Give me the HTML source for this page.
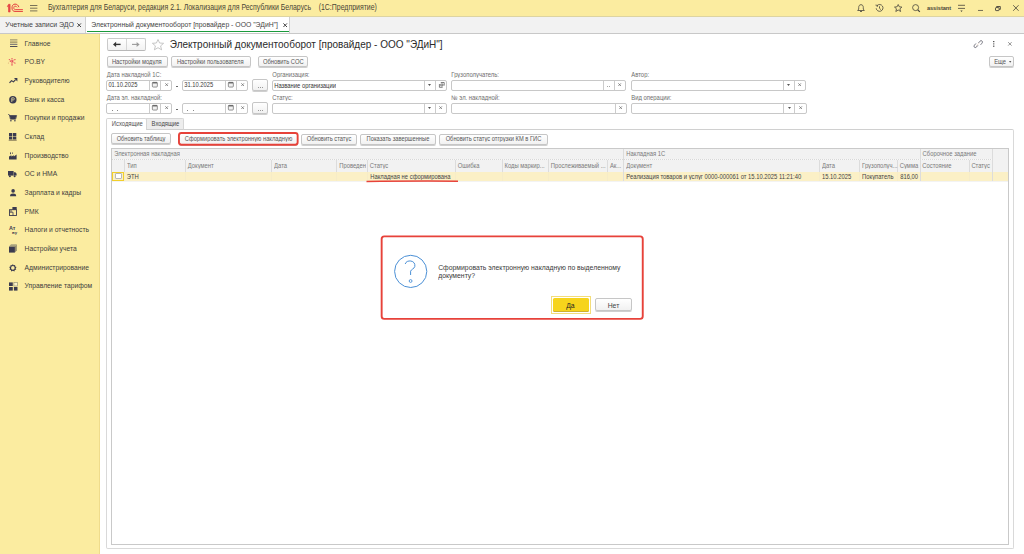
<!DOCTYPE html>
<html><head><meta charset="utf-8">
<style>
*{box-sizing:border-box;margin:0;padding:0}
html,body{width:1024px;height:554px;overflow:hidden;background:#fff;font-family:"Liberation Sans",sans-serif;color:#333}
.a{position:absolute}
.t{position:absolute;white-space:nowrap;line-height:1;transform-origin:0 0}
svg{position:absolute;overflow:visible}
.btn{position:absolute;border:1px solid #c6c6c6;border-radius:2px;background:linear-gradient(#ffffff,#f1f1f1);box-shadow:0 1px 0 #cfcfcf}
.fld{position:absolute;border:1px solid #c8c8c8;border-radius:2px;background:#fff}
.dv{position:absolute;top:0;bottom:0;width:1px;background:#cccccc}
</style></head><body>

<div class="a" style="left:0px;top:0px;width:1024px;height:16px;background:#fbeca0"></div>
<div class="a" style="left:0px;top:16px;width:1024px;height:1px;background:#ddd4a2"></div>
<div class="a" style="left:0px;top:17px;width:1024px;height:16px;background:#f2f2f2"></div>
<div class="a" style="left:0px;top:33px;width:1024px;height:1px;background:#c8c8c8"></div>
<div class="a" style="left:0px;top:34px;width:100px;height:520px;background:#fbeca0"></div>
<div class="a" style="left:99px;top:34px;width:1px;height:520px;background:#efdc8c"></div>
<svg style="left:4px;top:2px" width="22" height="12" viewBox="0 0 22 12">
 <path d="M3.3 4.6 L4.6 2.3 H6.1 V10 H4.5 V4.6 Z" fill="#e84a4a" stroke="#e33b3b" stroke-width="0.6"/>
 <path d="M14.9 5.2 C14.3 3.1 12.8 2.1 11 2.1 C8.9 2.1 8 3.9 8 5.9 C8 8.1 9.1 9.4 11 9.4 H18.9" stroke="#e33b3b" stroke-width="1" fill="none"/>
 <path d="M13.1 5.4 C12.7 4.6 12 4.1 11 4.1 C10.2 4.1 9.8 4.9 9.8 5.9 C9.8 6.9 10.4 7.6 11.2 7.6 H18.9" stroke="#e84a4a" stroke-width="1" fill="none"/></svg>
<svg style="left:30px;top:5px" width="8" height="7" viewBox="0 0 8 7"><path d="M0 0.5 H7.4 M0 3.2 H7.4 M0 5.9 H7.4" stroke="#6b6550" stroke-width="0.9"/></svg>
<div class="t" style="left:47.90px;top:4.21px;font-size:6.95px;color:#4a4536;font-weight:normal;transform:scaleY(1.2);">Бухгалтерия для Беларуси, редакция 2.1. Локализация для Республики Беларусь</div>
<div class="t" style="left:318.70px;top:4.21px;font-size:6.95px;color:#4a4536;font-weight:normal;transform:scaleY(1.2);">(1С:Предприятие)</div>
<svg style="left:857px;top:4px" width="8" height="8" viewBox="0 0 8 8"><path d="M4 0.7 C2.3 0.7 1.7 2 1.7 3.6 V5.1 L0.7 6.5 H7.3 L6.3 5.1 V3.6 C6.3 2 5.7 0.7 4 0.7 Z" stroke="#45423a" stroke-width="0.8" fill="none"/><path d="M3 7.5 H5" stroke="#45423a" stroke-width="0.8"/></svg>
<svg style="left:875px;top:4px" width="9" height="8" viewBox="0 0 9 8"><path d="M1.2 4.3 A3.4 3.4 0 1 0 2.1 1.6" stroke="#45423a" stroke-width="0.8" fill="none"/><path d="M0.5 1.1 L2.5 1.4 L2.1 3" stroke="#45423a" stroke-width="0.8" fill="none"/><path d="M4.5 2.3 V4.3 L5.9 5.6" stroke="#45423a" stroke-width="0.8" fill="none"/></svg>
<svg style="left:893.5px;top:4px" width="9" height="8" viewBox="0 0 9 8"><path d="M4.2 0.5 L5.3 2.8 L7.9 3.1 L5.9 4.8 L6.6 7.5 L4.2 6 L1.8 7.5 L2.5 4.8 L0.5 3.1 L3.1 2.8 Z" stroke="#45423a" stroke-width="0.8" fill="none" stroke-linejoin="round"/></svg>
<svg style="left:912px;top:4px" width="9" height="9" viewBox="0 0 9 9"><circle cx="3.6" cy="3.6" r="3" stroke="#45423a" stroke-width="0.8" fill="none"/><path d="M5.8 5.8 L7.8 7.8" stroke="#45423a" stroke-width="1.2"/></svg>
<div class="t" style="left:926.90px;top:5.70px;font-size:5.6px;color:#4a4536;font-weight:bold;transform:scaleY(1.1);">assistant</div>
<svg style="left:958px;top:4px" width="8" height="9" viewBox="0 0 8 9"><path d="M0 1.3 H7 M0 4.4 H7" stroke="#45423a" stroke-width="0.8"/><path d="M2.4 6.6 H4.6 L3.5 7.9 Z" fill="#45423a"/></svg>
<svg style="left:977.7px;top:10px" width="6" height="2" viewBox="0 0 6 2"><path d="M0 0.45 H5" stroke="#45423a" stroke-width="0.75"/></svg>
<svg style="left:995.3px;top:6px" width="6" height="5" viewBox="0 0 6 5"><rect x="0.5" y="1.6" width="3.6" height="3" rx="0.6" stroke="#45423a" stroke-width="0.9" fill="none"/><path d="M1.6 1.4 V0.5 H5.3 V3.4 H4.3" stroke="#45423a" stroke-width="0.9" fill="none"/></svg>
<svg style="left:1013.3px;top:4.9px" width="6" height="6" viewBox="0 0 6 6"><path d="M0.2 0.2 L5.6 5.8 M5.6 0.2 L0.2 5.8" stroke="#45423a" stroke-width="0.8"/></svg>
<div class="t" style="left:5.20px;top:21.21px;font-size:7px;color:#444;font-weight:normal;transform:scaleY(1.08);">Учетные записи ЭДО</div>
<svg style="left:77px;top:23.3px" width="5" height="5" viewBox="0 0 5 5"><path d="M0.4 0.4 L4 4 M4 0.4 L0.4 4" stroke="#444" stroke-width="1"/></svg>
<div class="a" style="left:85px;top:17px;width:205px;height:16px;background:#fff;border-left:1px solid #d0d0d0;border-right:1px solid #d0d0d0"></div>
<div class="a" style="left:87px;top:30.8px;width:202px;height:1.5px;background:#1a9a3c"></div>
<div class="t" style="left:91.30px;top:21.73px;font-size:6.85px;color:#444;font-weight:normal;transform:scaleY(1.08);">Электронный документооборот [провайдер - ООО &quot;ЭДиН&quot;]</div>
<svg style="left:282.6px;top:23.3px" width="5" height="5" viewBox="0 0 5 5"><path d="M0.4 0.4 L4 4 M4 0.4 L0.4 4" stroke="#444" stroke-width="1"/></svg>
<div class="t" style="left:24.60px;top:39.54px;font-size:6.75px;color:#3d3d3d;font-weight:normal;transform:scaleY(1.2);">Главное</div>
<div class="t" style="left:24.60px;top:58.22px;font-size:6.75px;color:#3d3d3d;font-weight:normal;transform:scaleY(1.2);">РО.BY</div>
<div class="t" style="left:24.60px;top:76.90px;font-size:6.75px;color:#3d3d3d;font-weight:normal;transform:scaleY(1.2);">Руководителю</div>
<div class="t" style="left:24.60px;top:95.58px;font-size:6.75px;color:#3d3d3d;font-weight:normal;transform:scaleY(1.2);">Банк и касса</div>
<div class="t" style="left:24.60px;top:114.26px;font-size:6.75px;color:#3d3d3d;font-weight:normal;transform:scaleY(1.2);">Покупки и продажи</div>
<div class="t" style="left:24.60px;top:132.94px;font-size:6.75px;color:#3d3d3d;font-weight:normal;transform:scaleY(1.2);">Склад</div>
<div class="t" style="left:24.60px;top:151.62px;font-size:6.75px;color:#3d3d3d;font-weight:normal;transform:scaleY(1.2);">Производство</div>
<div class="t" style="left:24.60px;top:170.30px;font-size:6.75px;color:#3d3d3d;font-weight:normal;transform:scaleY(1.2);">ОС и НМА</div>
<div class="t" style="left:24.60px;top:188.98px;font-size:6.75px;color:#3d3d3d;font-weight:normal;transform:scaleY(1.2);">Зарплата и кадры</div>
<div class="t" style="left:24.60px;top:207.66px;font-size:6.75px;color:#3d3d3d;font-weight:normal;transform:scaleY(1.2);">РМК</div>
<div class="t" style="left:24.60px;top:226.34px;font-size:6.75px;color:#3d3d3d;font-weight:normal;transform:scaleY(1.2);">Налоги и отчетность</div>
<div class="t" style="left:24.60px;top:245.02px;font-size:6.75px;color:#3d3d3d;font-weight:normal;transform:scaleY(1.2);">Настройки учета</div>
<div class="t" style="left:24.60px;top:263.70px;font-size:6.75px;color:#3d3d3d;font-weight:normal;transform:scaleY(1.2);">Администрирование</div>
<div class="t" style="left:24.60px;top:282.38px;font-size:6.75px;color:#3d3d3d;font-weight:normal;transform:scaleY(1.2);">Управление тарифом</div>
<svg style="left:9.5px;top:39px" width="8" height="8" viewBox="0 0 8 8"><path d="M0 0.9 H7.4" stroke="#8c8668" stroke-width="1"/><path d="M0 3.1 H7.4" stroke="#7d7356" stroke-width="1"/><path d="M0 5.3 H7.4" stroke="#55546a" stroke-width="0.9"/><path d="M0 7.5 H7.4" stroke="#3b3b4f" stroke-width="0.9"/></svg>
<svg style="left:8.3px;top:57.5px" width="8" height="8" viewBox="0 0 8 8"><g fill="#e5475a"><circle cx="1.3" cy="1.6" r="0.55"/><circle cx="4" cy="0.5" r="0.55"/><circle cx="7" cy="1.6" r="0.65"/><circle cx="2.3" cy="3.3" r="0.6"/><circle cx="4.6" cy="3.3" r="0.7"/><circle cx="4" cy="4.8" r="0.6"/><circle cx="0.4" cy="5" r="0.5" fill="#d8a070"/><circle cx="7" cy="5.1" r="0.6"/><circle cx="4" cy="7" r="0.65"/></g><path d="M1.3 1.6 L7 5.1 M7 1.6 L2.3 3.3 M4 0.5 V7" stroke="#e5475a" stroke-width="0.5"/></svg>
<svg style="left:8.9px;top:77.6px" width="9" height="6" viewBox="0 0 9 6"><path d="M0.5 4.9 L2.6 2.6 L4.4 3.9 L6.6 1.6" stroke="#3b3b4f" stroke-width="1.15" fill="none" stroke-linejoin="round"/><path d="M5 0 H8.4 V3.4 Z" fill="#3b3b4f"/></svg>
<svg style="left:9.2px;top:95.6px" width="8" height="8" viewBox="0 0 8 8"><circle cx="3.85" cy="3.7" r="3.7" fill="#3b3b4f"/><path d="M2.8 6 V1.8 H4.5 C5.6 1.8 5.6 3.9 4.5 3.9 H2.8" stroke="#d8cf9a" stroke-width="0.9" fill="none"/></svg>
<svg style="left:8.3px;top:114px" width="9" height="8" viewBox="0 0 9 8"><path d="M0.2 0.4 L1.4 0.8 L2.4 5.2 H7.6 L8.6 1.5 H1.6" stroke="#3b3b4f" stroke-width="0.8" fill="none"/><path d="M1.8 1.8 H8.3 L7.4 5 H2.5 Z" fill="#3b3b4f"/><circle cx="2.9" cy="6.8" r="0.8" fill="#3b3b4f"/><circle cx="6.9" cy="6.8" r="0.8" fill="#3b3b4f"/></svg>
<svg style="left:8.9px;top:133px" width="8" height="8" viewBox="0 0 8 8"><rect x="0" y="0" width="3.3" height="3" fill="#3b3b4f"/><rect x="4" y="0" width="3.3" height="3" fill="#3b3b4f"/><rect x="0" y="3.5" width="3.3" height="3" fill="#3b3b4f"/><rect x="4" y="3.5" width="3.3" height="3" fill="#3b3b4f"/><rect x="-0.3" y="6.8" width="8" height="0.8" fill="#6b6048"/></svg>
<svg style="left:8.9px;top:151.7px" width="8" height="8" viewBox="0 0 8 8"><path d="M0 7.4 V4.4 L2.4 3.2 V4.4 L4.8 3.2 V4.4 L7.6 2.6 V7.4 Z" fill="#3b3b4f"/><rect x="1" y="0.4" width="0.9" height="1.8" fill="#3b3b4f"/><rect x="3" y="0.6" width="1" height="1" fill="#3b3b4f"/></svg>
<svg style="left:8.3px;top:171px" width="9" height="7" viewBox="0 0 9 7"><rect x="0" y="0" width="5.6" height="4.6" fill="#3b3b4f"/><path d="M5.8 1.2 H7.4 L8.6 2.8 V4.6 H5.8 Z" fill="#3b3b4f"/><circle cx="1.9" cy="5.3" r="1" fill="#3b3b4f"/><circle cx="6.6" cy="5.3" r="1" fill="#3b3b4f"/></svg>
<svg style="left:9.8px;top:189px" width="7" height="8" viewBox="0 0 7 8"><circle cx="3.1" cy="1.9" r="1.8" fill="#3b3b4f"/><path d="M0 7.2 C0 5 1.2 4.4 3.1 4.4 C5 4.4 6.2 5 6.2 7.2 Z" fill="#3b3b4f"/></svg>
<svg style="left:8.9px;top:207px" width="8" height="9" viewBox="0 0 8 9"><rect x="0.5" y="2.7" width="7" height="5.8" stroke="#3b3b4f" stroke-width="0.9" fill="none"/><rect x="3.4" y="0" width="4.3" height="2.8" fill="#3b3b4f"/><path d="M0.5 5.2 H4 V8.5 M2 2.7 V5.2" stroke="#3b3b4f" stroke-width="0.8" fill="none"/></svg>
<svg style="left:8.9px;top:222px" width="8" height="12" viewBox="0 0 8 12"><text x="0" y="7.8" font-size="5.4" font-weight="bold" fill="#3b3b4f" font-family="Liberation Sans">Ат</text><text x="3.1" y="11.9" font-size="4.3" font-weight="bold" fill="#3b3b4f" font-family="Liberation Sans">ву</text></svg>
<svg style="left:8.9px;top:244px" width="8" height="9" viewBox="0 0 8 9"><path d="M0 2.6 L2 0.3 H7.8 L5.9 2.6 Z" fill="#a9a37e"/><path d="M5.9 2.6 L7.8 0.3 V6.6 L5.9 8.6 Z" fill="#8f8a6c"/><rect x="0" y="2.6" width="5.9" height="6" fill="#3b3b4f"/></svg>
<svg style="left:9.2px;top:263.9px" width="8" height="8" viewBox="0 0 8 8"><path d="M3.85 0 L4.6 1.3 L6.1 0.9 L6.2 2.4 L7.6 3 L6.6 4.2 L7.3 5.6 L5.8 5.9 L5.4 7.4 L3.85 6.7 L2.3 7.4 L1.9 5.9 L0.4 5.6 L1.1 4.2 L0.1 3 L1.5 2.4 L1.6 0.9 L3.1 1.3 Z" fill="#3b3b4f"/><circle cx="3.85" cy="3.9" r="1.8" fill="#fbeca0"/></svg>
<svg style="left:8.6px;top:281.7px" width="9" height="9" viewBox="0 0 9 9"><rect x="0" y="0.4" width="3.8" height="3.6" fill="#3b3b4f"/><rect x="4.9" y="0.4" width="3.6" height="3.6" stroke="#8a8670" stroke-width="0.6" fill="#fbf3c8"/><rect x="0" y="5" width="3.8" height="3.6" fill="#3b3b4f"/><rect x="4.9" y="5" width="3.6" height="3.6" fill="#3b3b4f"/></svg>
<div class="a" style="left:107px;top:38px;width:39px;height:13px;border:1px solid #cacaca;border-bottom-color:#b8b8b8;border-radius:2px;background:linear-gradient(#fff,#f2f2f2)"></div>
<div class="a" style="left:126px;top:39px;width:1px;height:11px;background:#d6d6d6"></div>
<svg style="left:113px;top:42.2px" width="8" height="6" viewBox="0 0 8 6"><path d="M7.6 2.4 H2.2" stroke="#333" stroke-width="1.4"/><path d="M0 2.4 L3.1 -0.2 V5 Z" fill="#333"/></svg>
<svg style="left:132px;top:42.2px" width="8" height="6" viewBox="0 0 8 6"><path d="M0 2.4 H5.4" stroke="#9a9a9a" stroke-width="1.1"/><path d="M7.6 2.4 L4.6 -0.1 V4.9 Z" fill="#9a9a9a"/></svg>
<svg style="left:152px;top:38.8px" width="13" height="12" viewBox="0 0 13 12"><path d="M6 0.5 L7.6 4 L11.6 4.3 L8.6 6.9 L9.6 10.8 L6 8.7 L2.4 10.8 L3.4 6.9 L0.4 4.3 L4.4 4 Z" stroke="#b9b9b9" stroke-width="0.8" fill="none" stroke-linejoin="round"/></svg>
<div class="t" style="left:169.80px;top:40.07px;font-size:10px;color:#2b2b2b;font-weight:normal;transform:scaleY(1.02);">Электронный документооборот [провайдер - ООО &quot;ЭДиН&quot;]</div>
<svg style="left:973.8px;top:39.9px" width="9" height="9" viewBox="0 0 9 9"><path d="M4.5 2.9 L5.9 1.3 C6.6 0.5 7.6 0.5 8.1 1.1 C8.6 1.7 8.5 2.7 7.8 3.4 L6.6 4.8" stroke="#5a5a66" stroke-width="0.85" fill="none"/><path d="M3.9 5.4 L2.6 6.9 C1.9 7.7 0.9 7.8 0.4 7.2 C-0.1 6.6 0 5.6 0.7 4.9 L1.9 3.5" stroke="#5a5a66" stroke-width="0.85" fill="none"/><path d="M2.6 5.6 L5.6 2.6" stroke="#c09070" stroke-width="0.6" stroke-dasharray="0.7 0.7"/></svg>
<svg style="left:993.2px;top:41px" width="2" height="6" viewBox="0 0 2 6"><rect x="0" y="0" width="1.4" height="1.2" fill="#555"/><rect x="0" y="2.3" width="1.4" height="1.2" fill="#777"/><rect x="0" y="4.6" width="1.4" height="1.2" fill="#555"/></svg>
<svg style="left:1008px;top:42.2px" width="4" height="4" viewBox="0 0 4 4"><path d="M0.2 0.2 L3.6 3.6 M3.6 0.2 L0.2 3.6" stroke="#666" stroke-width="0.7"/></svg>
<div class="btn" style="left:107px;top:56px;width:61px;height:11px;"></div>
<div class="t" style="left:111.90px;top:58.94px;font-size:5.81px;color:#555555;font-weight:normal;transform:scaleY(1.13);">Настройки модуля</div>
<div class="btn" style="left:171px;top:56px;width:80px;height:11px;"></div>
<div class="t" style="left:176.90px;top:58.94px;font-size:5.81px;color:#555555;font-weight:normal;transform:scaleY(1.13);">Настройки пользователя</div>
<div class="btn" style="left:258px;top:56px;width:50px;height:11px;"></div>
<div class="t" style="left:263.00px;top:58.94px;font-size:5.81px;color:#555555;font-weight:normal;transform:scaleY(1.13);">Обновить СОС</div>
<div class="btn" style="left:989px;top:56px;width:25px;height:11px;"></div>
<div class="t" style="left:994.20px;top:58.94px;font-size:5.81px;color:#555555;font-weight:normal;transform:scaleY(1.13);">Еще</div>
<svg style="left:1008.8px;top:60.9px" width="3" height="2" viewBox="0 0 3 2"><path d="M0 0 H2.4 L1.2 1.7 Z" fill="#555"/></svg>
<div class="t" style="left:106.80px;top:71.93px;font-size:5.9px;color:#6e6e6e;font-weight:normal;transform:scaleY(1.13);">Дата накладной 1С:</div>
<div class="t" style="left:106.80px;top:95.43px;font-size:5.9px;color:#6e6e6e;font-weight:normal;transform:scaleY(1.13);">Дата эл. накладной:</div>
<div class="t" style="left:272.30px;top:71.93px;font-size:5.9px;color:#6e6e6e;font-weight:normal;transform:scaleY(1.13);">Организация:</div>
<div class="t" style="left:272.30px;top:95.43px;font-size:5.9px;color:#6e6e6e;font-weight:normal;transform:scaleY(1.13);">Статус:</div>
<div class="t" style="left:451.30px;top:71.93px;font-size:5.9px;color:#6e6e6e;font-weight:normal;transform:scaleY(1.13);">Грузополучатель:</div>
<div class="t" style="left:451.30px;top:95.43px;font-size:5.9px;color:#6e6e6e;font-weight:normal;transform:scaleY(1.13);">№ эл. накладной:</div>
<div class="t" style="left:631.30px;top:71.93px;font-size:5.9px;color:#6e6e6e;font-weight:normal;transform:scaleY(1.13);">Автор:</div>
<div class="t" style="left:631.30px;top:95.43px;font-size:5.9px;color:#6e6e6e;font-weight:normal;transform:scaleY(1.13);">Вид операции:</div>
<div class="fld" style="left:106px;top:80px;width:66px;height:11px"><div class="dv" style="left:42px"></div><div class="dv" style="left:53px"></div></div>
<svg style="left:152.3px;top:82.4px" width="6" height="6" viewBox="0 0 6 6"><rect x="0.35" y="0.35" width="5" height="4.7" rx="0.9" stroke="#666" stroke-width="0.7" fill="#f0f0f0"/><rect x="0.5" y="0.3" width="4.7" height="1.1" fill="#555"/></svg>
<svg style="left:164.6px;top:83.1px" width="4" height="4" viewBox="0 0 4 4"><path d="M0.3 0.3 L3 3 M3 0.3 L0.3 3" stroke="#666" stroke-width="0.7"/></svg>
<div class="fld" style="left:182px;top:80px;width:66px;height:11px"><div class="dv" style="left:42px"></div><div class="dv" style="left:53px"></div></div>
<svg style="left:228.3px;top:82.4px" width="6" height="6" viewBox="0 0 6 6"><rect x="0.35" y="0.35" width="5" height="4.7" rx="0.9" stroke="#666" stroke-width="0.7" fill="#f0f0f0"/><rect x="0.5" y="0.3" width="4.7" height="1.1" fill="#555"/></svg>
<svg style="left:240.6px;top:83.1px" width="4" height="4" viewBox="0 0 4 4"><path d="M0.3 0.3 L3 3 M3 0.3 L0.3 3" stroke="#666" stroke-width="0.7"/></svg>
<div class="a" style="left:176.4px;top:85.9px;width:2px;height:0.9px;background:#6a6a6a"></div>
<div class="btn" style="left:252px;top:79px;width:16px;height:12px;"></div>
<svg style="left:257.5px;top:86.6px" width="6" height="1" viewBox="0 0 6 1"><rect x="0" y="0" width="0.8" height="0.8" fill="#666"/><rect x="2" y="0" width="0.8" height="0.8" fill="#666"/><rect x="4" y="0" width="0.8" height="0.8" fill="#666"/></svg>
<div class="fld" style="left:106px;top:103px;width:66px;height:11px"><div class="dv" style="left:42px"></div><div class="dv" style="left:53px"></div></div>
<svg style="left:152.3px;top:105.4px" width="6" height="6" viewBox="0 0 6 6"><rect x="0.35" y="0.35" width="5" height="4.7" rx="0.9" stroke="#666" stroke-width="0.7" fill="#f0f0f0"/><rect x="0.5" y="0.3" width="4.7" height="1.1" fill="#555"/></svg>
<svg style="left:164.6px;top:106.1px" width="4" height="4" viewBox="0 0 4 4"><path d="M0.3 0.3 L3 3 M3 0.3 L0.3 3" stroke="#666" stroke-width="0.7"/></svg>
<div class="fld" style="left:182px;top:103px;width:66px;height:11px"><div class="dv" style="left:42px"></div><div class="dv" style="left:53px"></div></div>
<svg style="left:228.3px;top:105.4px" width="6" height="6" viewBox="0 0 6 6"><rect x="0.35" y="0.35" width="5" height="4.7" rx="0.9" stroke="#666" stroke-width="0.7" fill="#f0f0f0"/><rect x="0.5" y="0.3" width="4.7" height="1.1" fill="#555"/></svg>
<svg style="left:240.6px;top:106.1px" width="4" height="4" viewBox="0 0 4 4"><path d="M0.3 0.3 L3 3 M3 0.3 L0.3 3" stroke="#666" stroke-width="0.7"/></svg>
<div class="a" style="left:176.4px;top:108.9px;width:2px;height:0.9px;background:#6a6a6a"></div>
<div class="btn" style="left:252px;top:102px;width:16px;height:12px;"></div>
<svg style="left:257.5px;top:109.6px" width="6" height="1" viewBox="0 0 6 1"><rect x="0" y="0" width="0.8" height="0.8" fill="#666"/><rect x="2" y="0" width="0.8" height="0.8" fill="#666"/><rect x="4" y="0" width="0.8" height="0.8" fill="#666"/></svg>
<div class="fld" style="left:272px;top:80px;width:175px;height:11px"><div class="dv" style="left:151px"></div><div class="dv" style="left:162px"></div></div>
<svg style="left:428.1px;top:84px" width="3" height="2" viewBox="0 0 3 2"><path d="M0 0 H3 L1.5 2 Z" fill="#555"/></svg>
<svg style="left:439px;top:82.3px" width="6" height="6" viewBox="0 0 6 6"><path d="M0.4 2 V5.3 H3.6 M1.8 2 H3.9 V3.9 H1.8 Z M1.8 0.5 H5.2 V3.6" stroke="#555" stroke-width="0.75" fill="none"/></svg>
<div class="t" style="left:274.20px;top:82.54px;font-size:5.85px;color:#333;font-weight:normal;transform:scaleY(1.13);">Название организации</div>
<div class="fld" style="left:272px;top:103px;width:175px;height:11px"><div class="dv" style="left:151px"></div><div class="dv" style="left:162px"></div></div>
<svg style="left:428.1px;top:107px" width="3" height="2" viewBox="0 0 3 2"><path d="M0 0 H3 L1.5 2 Z" fill="#555"/></svg>
<svg style="left:439.2px;top:106.1px" width="4" height="4" viewBox="0 0 4 4"><path d="M0.3 0.3 L3 3 M3 0.3 L0.3 3" stroke="#666" stroke-width="0.7"/></svg>
<div class="fld" style="left:451px;top:80px;width:175px;height:11px"><div class="dv" style="left:151px"></div><div class="dv" style="left:162px"></div></div>
<svg style="left:618.4px;top:83.1px" width="4" height="4" viewBox="0 0 4 4"><path d="M0.3 0.3 L3 3 M3 0.3 L0.3 3" stroke="#666" stroke-width="0.7"/></svg>
<svg style="left:606.8px;top:86.2px" width="5" height="1" viewBox="0 0 5 1"><rect x="0" y="0" width="0.8" height="0.8" fill="#777"/><rect x="2.2" y="0" width="0.8" height="0.8" fill="#777"/></svg>
<div class="fld" style="left:451px;top:103px;width:176px;height:11px"><div class="dv" style="left:163px"></div></div>
<svg style="left:619.2px;top:106.1px" width="4" height="4" viewBox="0 0 4 4"><path d="M0.3 0.3 L3 3 M3 0.3 L0.3 3" stroke="#666" stroke-width="0.7"/></svg>
<div class="fld" style="left:631px;top:80px;width:175px;height:11px"><div class="dv" style="left:151px"></div><div class="dv" style="left:162px"></div></div>
<svg style="left:787.2px;top:84px" width="3" height="2" viewBox="0 0 3 2"><path d="M0 0 H3 L1.5 2 Z" fill="#555"/></svg>
<svg style="left:798.1px;top:83.1px" width="4" height="4" viewBox="0 0 4 4"><path d="M0.3 0.3 L3 3 M3 0.3 L0.3 3" stroke="#666" stroke-width="0.7"/></svg>
<div class="fld" style="left:631px;top:103px;width:176px;height:11px"><div class="dv" style="left:151px"></div><div class="dv" style="left:162px"></div></div>
<svg style="left:787.5px;top:107px" width="3" height="2" viewBox="0 0 3 2"><path d="M0 0 H3 L1.5 2 Z" fill="#555"/></svg>
<svg style="left:798.5px;top:106.1px" width="4" height="4" viewBox="0 0 4 4"><path d="M0.3 0.3 L3 3 M3 0.3 L0.3 3" stroke="#666" stroke-width="0.7"/></svg>
<div class="t" style="left:108.40px;top:81.97px;font-size:5.8px;color:#3a3a3a;font-weight:normal;transform:scaleY(1.36);">01.10.2025</div>
<div class="t" style="left:184.20px;top:81.97px;font-size:5.8px;color:#3a3a3a;font-weight:normal;transform:scaleY(1.36);">31.10.2025</div>
<div class="a" style="left:111.5px;top:109.6px;width:0.8px;height:0.8px;background:#888"></div>
<div class="a" style="left:117.2px;top:109.6px;width:0.8px;height:0.8px;background:#888"></div>
<div class="a" style="left:187.1px;top:109.6px;width:0.8px;height:0.8px;background:#888"></div>
<div class="a" style="left:192.5px;top:109.6px;width:0.8px;height:0.8px;background:#888"></div>
<div class="a" style="left:106px;top:129px;width:908px;height:420px;border:1px solid #d9d9d9;border-top-color:#d0d0d0;border-radius:0 2px 2px 2px"></div>
<div class="a" style="left:106px;top:118px;width:41px;height:12px;background:#fff;border:1px solid #d6d6d6;border-bottom:none;border-radius:2px 2px 0 0"></div>
<div class="a" style="left:146px;top:118px;width:38px;height:12px;background:#ededed;border:1px solid #d6d6d6;border-bottom:1px solid #d0d0d0;border-radius:0 2px 0 0"></div>
<div class="t" style="left:111.80px;top:121.04px;font-size:5.85px;color:#505050;font-weight:normal;transform:scaleY(1.13);">Исходящие</div>
<div class="t" style="left:151.60px;top:121.04px;font-size:5.85px;color:#484848;font-weight:normal;transform:scaleY(1.13);">Входящие</div>
<div class="btn" style="left:111px;top:133px;width:60px;height:11px;"></div>
<div class="t" style="left:111px;width:60px;text-align:center;top:135.86px;font-size:5.7px;color:#555555;transform:scaleY(1.13)">Обновить таблицу</div>
<div class="btn" style="left:179px;top:133px;width:119px;height:12px;"></div>
<div class="t" style="left:179px;width:119px;text-align:center;top:136.05px;font-size:5.75px;color:#555555;transform:scaleY(1.13)">Сформировать электронную накладную</div>
<svg style="left:0px;top:0px" width="1024" height="554" viewBox="0 0 1024 554"><rect x="178.95" y="132.95" width="118.7" height="11.8" rx="2.4" stroke="#e7423a" stroke-width="1.9" fill="none"/></svg>
<div class="btn" style="left:301px;top:133.5px;width:56px;height:11px;"></div>
<div class="t" style="left:301px;width:56px;text-align:center;top:136.05px;font-size:5.75px;color:#555555;transform:scaleY(1.13)">Обновить статус</div>
<div class="btn" style="left:360px;top:133.5px;width:76px;height:11px;"></div>
<div class="t" style="left:360px;width:76px;text-align:center;top:136.05px;font-size:5.75px;color:#555555;transform:scaleY(1.13)">Показать завершенные</div>
<div class="btn" style="left:439px;top:133.5px;width:109px;height:11px;"></div>
<div class="t" style="left:439px;width:109px;text-align:center;top:136.05px;font-size:5.75px;color:#555555;transform:scaleY(1.13)">Обновить статус отгрузки КМ в ГИС</div>
<div class="a" style="left:111px;top:148px;width:898px;height:397px;border:1px solid #c9c9c9;background:#fff"></div>
<div class="a" style="left:112px;top:149px;width:896px;height:23px;background:#f2f2f2"></div>
<div class="a" style="left:112px;top:172px;width:896px;height:9px;background:#fbf0c6"></div>
<div class="a" style="left:112px;top:181px;width:896px;height:1px;background:#f3f3f3"></div>
<div class="a" style="left:112px;top:159px;width:880px;height:1px;background:repeating-linear-gradient(90deg,#d8d8d8 0 1px,#f8f8f8 1px 2px)"></div>
<div class="a" style="left:124px;top:160px;width:1px;height:12px;background:#dcdcdc"></div>
<div class="a" style="left:124px;top:172px;width:1px;height:9px;background:#f6ecc8"></div>
<div class="a" style="left:185px;top:160px;width:1px;height:12px;background:#dcdcdc"></div>
<div class="a" style="left:185px;top:172px;width:1px;height:9px;background:#f6ecc8"></div>
<div class="a" style="left:271px;top:160px;width:1px;height:12px;background:#dcdcdc"></div>
<div class="a" style="left:271px;top:172px;width:1px;height:9px;background:#f6ecc8"></div>
<div class="a" style="left:336px;top:160px;width:1px;height:12px;background:#dcdcdc"></div>
<div class="a" style="left:336px;top:172px;width:1px;height:9px;background:#f6ecc8"></div>
<div class="a" style="left:367px;top:160px;width:1px;height:12px;background:#dcdcdc"></div>
<div class="a" style="left:367px;top:172px;width:1px;height:9px;background:#f6ecc8"></div>
<div class="a" style="left:455px;top:160px;width:1px;height:12px;background:#dcdcdc"></div>
<div class="a" style="left:455px;top:172px;width:1px;height:9px;background:#f6ecc8"></div>
<div class="a" style="left:502px;top:160px;width:1px;height:12px;background:#dcdcdc"></div>
<div class="a" style="left:502px;top:172px;width:1px;height:9px;background:#f6ecc8"></div>
<div class="a" style="left:548px;top:160px;width:1px;height:12px;background:#dcdcdc"></div>
<div class="a" style="left:548px;top:172px;width:1px;height:9px;background:#f6ecc8"></div>
<div class="a" style="left:607px;top:160px;width:1px;height:12px;background:#dcdcdc"></div>
<div class="a" style="left:607px;top:172px;width:1px;height:9px;background:#f6ecc8"></div>
<div class="a" style="left:623px;top:149px;width:1px;height:32px;background:#dcdcdc"></div>
<div class="a" style="left:819px;top:160px;width:1px;height:12px;background:#dcdcdc"></div>
<div class="a" style="left:819px;top:172px;width:1px;height:9px;background:#f6ecc8"></div>
<div class="a" style="left:859px;top:160px;width:1px;height:12px;background:#dcdcdc"></div>
<div class="a" style="left:859px;top:172px;width:1px;height:9px;background:#f6ecc8"></div>
<div class="a" style="left:897px;top:160px;width:1px;height:12px;background:#dcdcdc"></div>
<div class="a" style="left:897px;top:172px;width:1px;height:9px;background:#f6ecc8"></div>
<div class="a" style="left:920px;top:149px;width:1px;height:32px;background:#dcdcdc"></div>
<div class="a" style="left:969px;top:160px;width:1px;height:12px;background:#dcdcdc"></div>
<div class="a" style="left:969px;top:172px;width:1px;height:9px;background:#f6ecc8"></div>
<div class="a" style="left:992px;top:149px;width:1px;height:32px;background:#dcdcdc"></div>
<div class="t" style="left:114.20px;top:151.24px;font-size:5.85px;color:#7a7a7a;font-weight:normal;transform:scaleY(1.13);">Электронная накладная</div>
<div class="t" style="left:626.30px;top:151.24px;font-size:5.85px;color:#7a7a7a;font-weight:normal;transform:scaleY(1.13);">Накладная 1С</div>
<div class="t" style="left:922.60px;top:151.24px;font-size:5.85px;color:#7a7a7a;font-weight:normal;transform:scaleY(1.13);">Сборочное задание</div>
<div class="t" style="left:127.00px;top:162.54px;font-size:5.85px;color:#7a7a7a;font-weight:normal;transform:scaleY(1.13);">Тип</div>
<div class="t" style="left:187.80px;top:162.54px;font-size:5.85px;color:#7a7a7a;font-weight:normal;transform:scaleY(1.13);">Документ</div>
<div class="t" style="left:274.10px;top:162.54px;font-size:5.85px;color:#7a7a7a;font-weight:normal;transform:scaleY(1.13);">Дата</div>
<div class="t" style="left:339.20px;top:162.54px;font-size:5.85px;color:#7a7a7a;font-weight:normal;transform:scaleY(1.13);">Проведен</div>
<div class="t" style="left:369.80px;top:162.54px;font-size:5.85px;color:#7a7a7a;font-weight:normal;transform:scaleY(1.13);">Статус</div>
<div class="t" style="left:457.70px;top:162.54px;font-size:5.85px;color:#7a7a7a;font-weight:normal;transform:scaleY(1.13);">Ошибка</div>
<div class="t" style="left:504.50px;top:162.54px;font-size:5.85px;color:#7a7a7a;font-weight:normal;transform:scaleY(1.13);">Коды маркир...</div>
<div class="t" style="left:550.70px;top:162.54px;font-size:5.85px;color:#7a7a7a;font-weight:normal;transform:scaleY(1.13);">Прослеживаемый ...</div>
<div class="t" style="left:609.90px;top:162.54px;font-size:5.85px;color:#7a7a7a;font-weight:normal;transform:scaleY(1.13);">Ак...</div>
<div class="t" style="left:626.30px;top:162.54px;font-size:5.85px;color:#7a7a7a;font-weight:normal;transform:scaleY(1.13);">Документ</div>
<div class="t" style="left:822.00px;top:162.54px;font-size:5.85px;color:#7a7a7a;font-weight:normal;transform:scaleY(1.13);">Дата</div>
<div class="t" style="left:862.10px;top:162.54px;font-size:5.85px;color:#7a7a7a;font-weight:normal;transform:scaleY(1.13);">Грузополуч...</div>
<div class="t" style="left:899.80px;top:162.54px;font-size:5.85px;color:#7a7a7a;font-weight:normal;transform:scaleY(1.13);">Сумма</div>
<div class="t" style="left:922.30px;top:162.54px;font-size:5.85px;color:#7a7a7a;font-weight:normal;transform:scaleY(1.13);">Состояние</div>
<div class="t" style="left:971.40px;top:162.54px;font-size:5.85px;color:#7a7a7a;font-weight:normal;transform:scaleY(1.13);">Статус</div>
<div class="t" style="left:126.80px;top:174.04px;font-size:5.85px;color:#444444;font-weight:normal;transform:scaleY(1.13);">ЭТН</div>
<div class="t" style="left:370.20px;top:174.04px;font-size:5.85px;color:#444444;font-weight:normal;transform:scaleY(1.13);">Накладная не сформирована</div>
<div class="t" style="left:626.30px;top:174.04px;font-size:5.85px;color:#444444;font-weight:normal;transform:scaleY(1.13);">Реализация товаров и услуг 0000-000061 от 15.10.2025 11:21:40</div>
<div class="t" style="left:822.00px;top:174.04px;font-size:5.85px;color:#444444;font-weight:normal;transform:scaleY(1.13);">15.10.2025</div>
<div class="t" style="left:862.10px;top:174.04px;font-size:5.85px;color:#444444;font-weight:normal;transform:scaleY(1.13);">Покупатель</div>
<div class="t" style="left:900.20px;top:174.04px;font-size:5.85px;color:#444444;font-weight:normal;transform:scaleY(1.13);">816,00</div>
<div class="a" style="left:112px;top:172px;width:12px;height:9px;border:1px solid #f2cf2a;background:#fbf0c6"></div>
<div class="a" style="left:114.5px;top:173.3px;width:7px;height:6px;border:1px solid #b8b8b8;background:#fff;border-radius:1px"></div>
<svg style="left:365.5px;top:180px" width="93" height="3" viewBox="0 0 93 3"><path d="M0.5 1.6 Q40 0.9 92 1.2" stroke="#e7423a" stroke-width="1.5" fill="none"/></svg>
<div class="a" style="left:381px;top:236px;width:262px;height:83px;background:#fff"></div>
<svg style="left:0px;top:0px" width="1024" height="554" viewBox="0 0 1024 554"><rect x="381.65" y="236.35" width="261.1" height="82.5" rx="2.6" stroke="#e7423a" stroke-width="1.9" fill="none"/></svg>
<svg style="left:394px;top:254.5px" width="34" height="34" viewBox="0 0 34 34"><circle cx="16.7" cy="16.4" r="16.1" stroke="#4b90d6" stroke-width="1" fill="none"/><path d="M11.2 9 C11.8 6.5 14.5 5.7 16.8 6 C19.8 6.4 21.3 8.8 20.8 11.5 C20.3 13.8 17.2 14.2 16.6 16.2 V20" stroke="#4b90d6" stroke-width="1" fill="none"/><circle cx="16.6" cy="26" r="1.4" stroke="#4b90d6" stroke-width="0.9" fill="none"/></svg>
<div class="t" style="left:438.20px;top:263.77px;font-size:6.84px;color:#3a3a3a;font-weight:normal;transform:scaleY(1.15);">Сформировать электронную накладную по выделенному</div>
<div class="t" style="left:438.20px;top:272.07px;font-size:6.84px;color:#3a3a3a;font-weight:normal;transform:scaleY(1.15);">документу?</div>
<div class="a" style="left:551px;top:296px;width:40px;height:18px;border:1px solid #f3dd7a"></div>
<div class="a" style="left:553px;top:298px;width:36px;height:13px;background:#f6d41c;border-radius:1.5px;box-shadow:0 1px 0 #cdb030"></div>
<div class="t" style="left:566.20px;top:301.67px;font-size:6.84px;color:#222;font-weight:normal;transform:scaleY(1.15);">Да</div>
<div class="btn" style="left:595px;top:298px;width:37px;height:13px;"></div>
<div class="t" style="left:607.70px;top:301.67px;font-size:6.84px;color:#444;font-weight:normal;transform:scaleY(1.15);">Нет</div>
</body></html>
